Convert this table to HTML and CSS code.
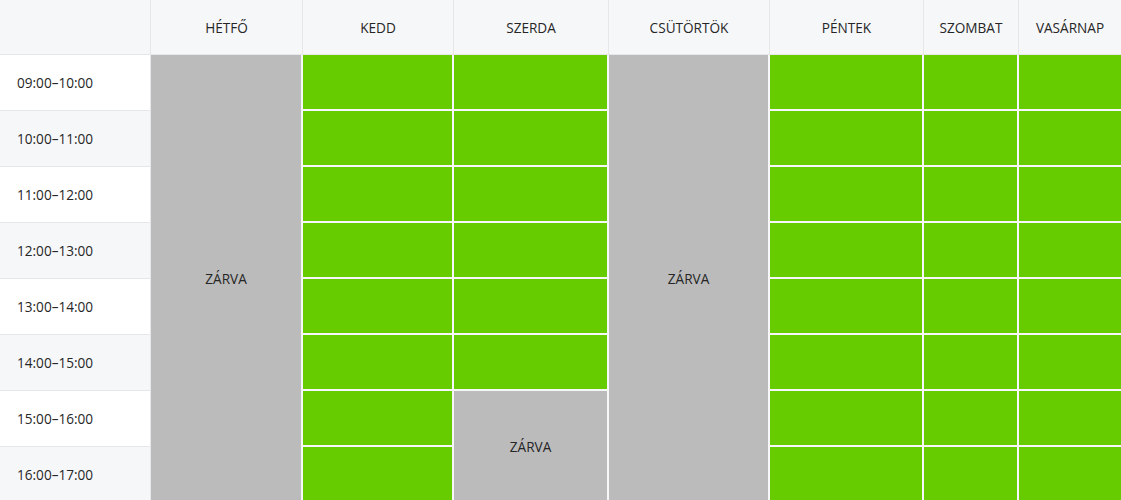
FILE: index.html
```html
<!DOCTYPE html>
<html lang="hu">
<head>
<meta charset="utf-8">
<title>Nyitvatartás</title>
<link rel="stylesheet" href="styles.css">
</head>
<body>
<table class="schedule">
  <colgroup>
    <col class="c-time">
    <col class="c-mon">
    <col class="c-tue">
    <col class="c-wed">
    <col class="c-thu">
    <col class="c-fri">
    <col class="c-sat">
    <col class="c-sun">
  </colgroup>
  <thead>
    <tr>
      <th class="corner"></th>
      <th>HÉTFŐ</th>
      <th>KEDD</th>
      <th>SZERDA</th>
      <th>CSÜTÖRTÖK</th>
      <th>PÉNTEK</th>
      <th>SZOMBAT</th>
      <th>VASÁRNAP</th>
    </tr>
  </thead>
  <tbody>
    <tr>
      <td class="time">09:00–10:00</td>
      <td class="slot closed" rowspan="8">ZÁRVA</td>
      <td class="slot open"></td>
      <td class="slot open"></td>
      <td class="slot closed" rowspan="8">ZÁRVA</td>
      <td class="slot open"></td>
      <td class="slot open"></td>
      <td class="slot open"></td>
    </tr>
    <tr class="alt">
      <td class="time">10:00–11:00</td>
      <td class="slot open"></td>
      <td class="slot open"></td>
      <td class="slot open"></td>
      <td class="slot open"></td>
      <td class="slot open"></td>
    </tr>
    <tr>
      <td class="time">11:00–12:00</td>
      <td class="slot open"></td>
      <td class="slot open"></td>
      <td class="slot open"></td>
      <td class="slot open"></td>
      <td class="slot open"></td>
    </tr>
    <tr class="alt">
      <td class="time">12:00–13:00</td>
      <td class="slot open"></td>
      <td class="slot open"></td>
      <td class="slot open"></td>
      <td class="slot open"></td>
      <td class="slot open"></td>
    </tr>
    <tr>
      <td class="time">13:00–14:00</td>
      <td class="slot open"></td>
      <td class="slot open"></td>
      <td class="slot open"></td>
      <td class="slot open"></td>
      <td class="slot open"></td>
    </tr>
    <tr class="alt">
      <td class="time">14:00–15:00</td>
      <td class="slot open"></td>
      <td class="slot open"></td>
      <td class="slot open"></td>
      <td class="slot open"></td>
      <td class="slot open"></td>
    </tr>
    <tr>
      <td class="time">15:00–16:00</td>
      <td class="slot open"></td>
      <td class="slot closed" rowspan="2">ZÁRVA</td>
      <td class="slot open"></td>
      <td class="slot open"></td>
      <td class="slot open"></td>
    </tr>
    <tr class="alt">
      <td class="time">16:00–17:00</td>
      <td class="slot open"></td>
      <td class="slot open"></td>
      <td class="slot open"></td>
      <td class="slot open"></td>
    </tr>
  </tbody>
</table>
</body>
</html>
```

FILE: styles.css
```css
html {
  overflow: hidden;
}

body {
  margin: 0;
  background: #ffffff;
  font-family: "Open Sans", "Noto Sans", sans-serif;
  font-size: 13.6px;
  color: #262626;
}

.schedule {
  width: 1121px;
  table-layout: fixed;
  border-collapse: separate;
  border-spacing: 0;
}

.c-time { width: 151px; }
.c-mon { width: 152px; }
.c-tue { width: 151px; }
.c-wed { width: 155px; }
.c-thu { width: 161px; }
.c-fri { width: 154px; }
.c-sat { width: 95px; }
.c-sun { width: 102px; }

.schedule th {
  height: 54px;
  padding: 0;
  background: #f6f7f9;
  border-right: 1px solid #e6e7eb;
  border-bottom: 1px solid #e6e7eb;
  font-weight: 400;
  text-align: center;
  vertical-align: middle;
  color: #262626;
}

.schedule th:last-child {
  border-right: none;
}

.schedule td {
  padding: 0;
  vertical-align: middle;
}

.time {
  height: 55px;
  padding-left: 17px !important;
  background: #ffffff;
  border-right: 1px solid #e6e7eb;
  border-bottom: 1px solid #e6e7eb;
  text-align: left;
}

.alt .time {
  background: #f6f7f9;
}

.slot {
  height: 54px;
  border-right: 2px solid #f7f7f9;
  border-bottom: 2px solid #f7f7f9;
  text-align: center;
}

.schedule td.slot:last-child {
  border-right: none;
}

.open {
  background: #66cc00;
}

.closed {
  background: #bbbbbb;
}
```
